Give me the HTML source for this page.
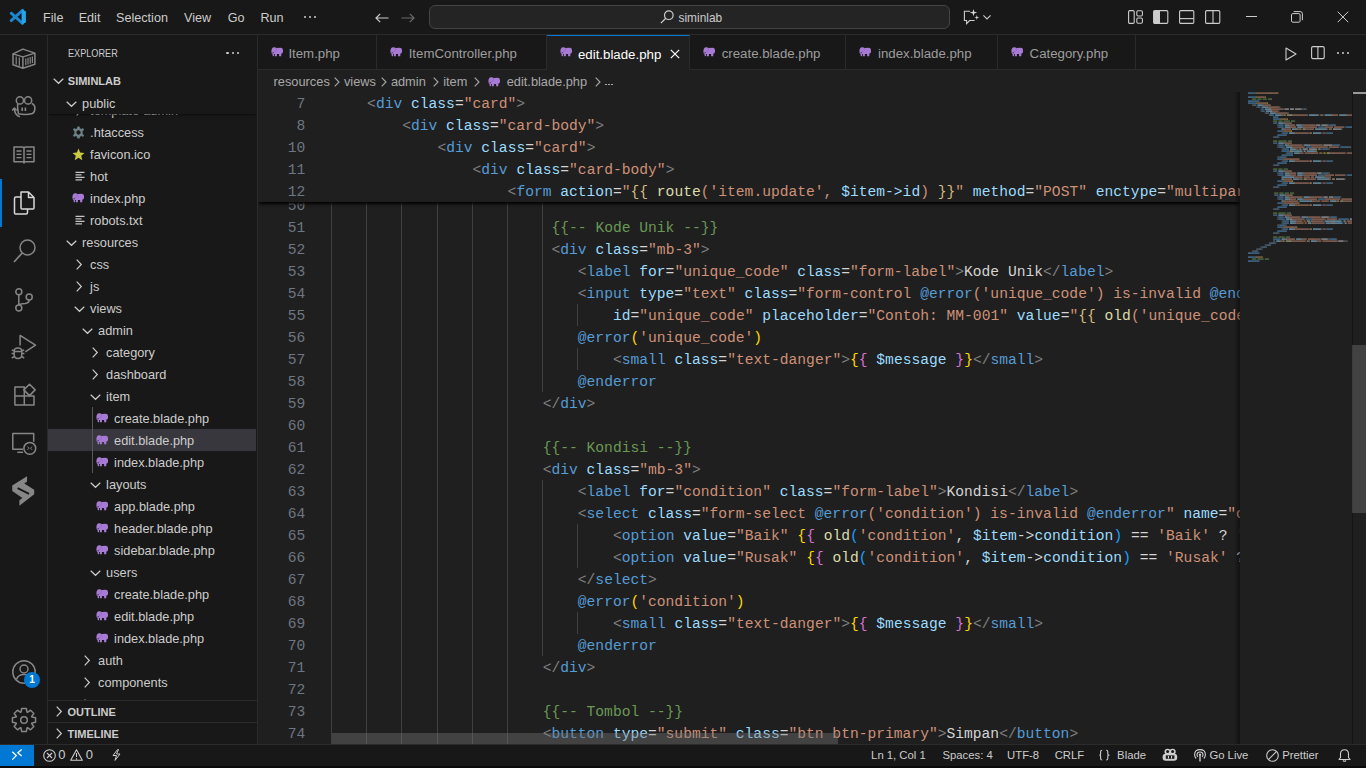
<!DOCTYPE html>
<html><head><meta charset="utf-8">
<style>
*{margin:0;padding:0;box-sizing:border-box}
html,body{width:1366px;height:768px;overflow:hidden;background:#181818;font-family:"Liberation Sans",sans-serif;color:#ccc}
.abs{position:absolute}
svg{position:absolute;overflow:visible}
#title{left:0;top:0;width:1366px;height:35px;background:#181818;border-bottom:1px solid #2b2b2b}
.menu{position:absolute;top:11px;font-size:12.6px;line-height:14px;color:#cccccc;white-space:nowrap}
#act{left:0;top:35px;width:48px;height:709px;background:#181818;border-right:1px solid #2b2b2b}
#side{left:48px;top:35px;width:210px;height:709px;background:#181818;border-right:1px solid #2b2b2b;overflow:hidden}
#tabs{left:258px;top:35px;width:1108px;height:35px;background:#181818;border-bottom:1px solid #2b2b2b}
.tab{position:absolute;top:0;height:35px;border-right:1px solid #2b2b2b;font-size:13.25px;color:#9d9d9d;white-space:nowrap}
.tab.act{background:#1f1f1f;color:#fff;border-top:1px solid #0078d4;height:35px}
.tab span{position:absolute;top:12px;line-height:14px}
#editor{left:258px;top:70px;width:1108px;height:674px;background:#1f1f1f;overflow:hidden}
#status{left:0;top:744px;width:1366px;height:22px;background:#181818;border-top:1px solid #2b2b2b;font-size:11.3px;color:#cccccc}
#bottomedge{left:0;top:766px;width:1366px;height:2px;background:#0a0a0a}
.st{position:absolute;top:4.3px;line-height:13px;white-space:nowrap}
.code{position:absolute;margin-top:1px;font-family:"Liberation Mono",monospace;font-size:14.645px;white-space:pre;color:#d4d4d4;line-height:22px;height:22px}
.ln{position:absolute;margin-top:1px;left:0;width:47.2px;text-align:right;font-family:"Liberation Mono",monospace;font-size:14.645px;color:#6e7681;line-height:22px;height:22px}
.gd{position:absolute;width:1px;background:#404040}
.tree{position:absolute;left:0;width:209px;height:22px;font-size:12.75px;color:#cccccc;white-space:nowrap}
.tree span{position:absolute;top:4.8px;line-height:14px}
.bc{position:absolute;top:8px;font-size:12.8px;line-height:14px;color:#a9a9a9;white-space:nowrap}
.p{color:#808080}
.t{color:#569cd6}
.a{color:#9cdcfe}
.e{color:#d4d4d4}
.s{color:#ce9178}
.x{color:#d4d4d4}
.c{color:#6a9955}
.k{color:#569cd6}
.g{color:#ffd700}
.o{color:#da70d6}
.bl{color:#179fff}
.v{color:#9cdcfe}
.f{color:#dcdcaa}
.y{color:#d7ba7d}
</style></head>
<body>
<div id="title" class="abs">
<svg style="left:6px;top:6px" width="24" height="22" viewBox="6 6 24 22"><path d="M22.6 10.2 L11.2 20.6 M22.6 23.4 L11.2 13.2" stroke="#1b87d2" stroke-width="2.9" stroke-linecap="round"/><path d="M21.6 9.4 L25.9 11.2 V22.5 L21.6 24.3 Z" fill="#27a3ee"/></svg>
<div class="menu" style="left:43.1px">File</div>
<div class="menu" style="left:78.7px">Edit</div>
<div class="menu" style="left:116.1px">Selection</div>
<div class="menu" style="left:184.1px">View</div>
<div class="menu" style="left:227.7px">Go</div>
<div class="menu" style="left:260.5px">Run</div>
<div class="abs" style="left:303.6px;top:16px;width:2.2px;height:2.2px;background:#ccc;border-radius:1px"></div>
<div class="abs" style="left:308.8px;top:16px;width:2.2px;height:2.2px;background:#ccc;border-radius:1px"></div>
<div class="abs" style="left:314.0px;top:16px;width:2.2px;height:2.2px;background:#ccc;border-radius:1px"></div>
<svg style="left:375px;top:13px" width="14" height="10" viewBox="0 0 14 10"><path d="M13.5 5 H1 M5.2 0.8 L1 5 L5.2 9.2" fill="none" stroke="#cccccc" stroke-width="1.2"/></svg>
<svg style="left:401px;top:13px" width="14" height="10" viewBox="0 0 14 10"><path d="M0.5 5 H13 M8.8 0.8 L13 5 L8.8 9.2" fill="none" stroke="#6b6b6b" stroke-width="1.2"/></svg>
<div class="abs" style="left:429px;top:5px;width:521px;height:24px;background:#242424;border:1px solid #444444;border-radius:6px"></div>
<svg style="left:660px;top:10px" width="14" height="14" viewBox="0 0 14 14"><circle cx="8.8" cy="5.2" r="4.3" fill="none" stroke="#cccccc" stroke-width="1.2"/><path d="M5.8 8.2 L0.9 13.1" stroke="#cccccc" stroke-width="1.3"/></svg>
<div class="menu" style="left:678.5px;top:11px;font-size:11.9px">siminlab</div>
<svg style="left:960px;top:7px" width="34" height="20" viewBox="960 7 34 20"><path d="M970.2 11.2 H964.4 V20.5 H966.6 V23.6 L969.6 20.5 H974.6" fill="none" stroke="#cccccc" stroke-width="1.1"/><path d="M973.50 8.90 L974.28 11.82 L977.20 12.60 L974.28 13.38 L973.50 16.30 L972.72 13.38 L969.80 12.60 L972.72 11.82 Z" fill="#d8d8d8"/><path d="M976.80 14.90 L977.37 16.93 L979.40 17.50 L977.37 18.07 L976.80 20.10 L976.23 18.07 L974.20 17.50 L976.23 16.93 Z" fill="#d8d8d8"/><path d="M983.4 15.4 L987 18.9 L990.6 15.4" fill="none" stroke="#cccccc" stroke-width="1.1"/></svg>
<svg style="left:1128px;top:10px" width="15" height="14" viewBox="0 0 15 14"><rect x="0.6" y="0.6" width="5.6" height="12.8" rx="1.2" fill="none" stroke="#cccccc" stroke-width="1.1"/><rect x="8.8" y="0.8" width="5.6" height="5.2" rx="1.2" fill="none" stroke="#cccccc" stroke-width="1.1"/><rect x="8.8" y="8" width="5.6" height="5.2" rx="1.2" fill="none" stroke="#cccccc" stroke-width="1.1"/></svg>
<svg style="left:1153px;top:10px" width="16" height="14" viewBox="0 0 16 14"><rect x="0.6" y="0.6" width="14.2" height="12.8" rx="1.2" fill="none" stroke="#cccccc" stroke-width="1.1"/><rect x="1" y="1" width="6" height="12" fill="#cccccc"/></svg>
<svg style="left:1179px;top:10px" width="16" height="14" viewBox="0 0 16 14"><rect x="0.6" y="0.6" width="14.2" height="12.8" rx="1.2" fill="none" stroke="#cccccc" stroke-width="1.1"/><path d="M0.6 8.6 H14.8" stroke="#cccccc" stroke-width="1.1"/></svg>
<svg style="left:1205px;top:10px" width="16" height="14" viewBox="0 0 16 14"><rect x="0.6" y="0.6" width="14.2" height="12.8" rx="1.2" fill="none" stroke="#cccccc" stroke-width="1.1"/><path d="M8 0.6 V13.4" stroke="#cccccc" stroke-width="1.1"/></svg>
<div class="abs" style="left:1246px;top:16px;width:10.5px;height:1px;background:#cccccc"></div>
<svg style="left:1291px;top:11px" width="12" height="12" viewBox="0 0 12 12"><rect x="0.5" y="2.6" width="8.6" height="8.6" rx="1.3" fill="none" stroke="#cccccc" stroke-width="1"/><path d="M2.7 0.6 H9.2 Q11.4 0.6 11.4 2.8 V9.2" fill="none" stroke="#cccccc" stroke-width="1"/></svg>
<svg style="left:1337px;top:11px" width="12" height="12" viewBox="0 0 12 12"><path d="M0.7 0.7 L11.2 11.2 M11.2 0.7 L0.7 11.2" stroke="#cccccc" stroke-width="1"/></svg>
</div>
<div id="act" class="abs">
<svg style="left:10.0px;top:11.0px" width="28" height="26" viewBox="10 46 28 26"><path d="M13 53.9 L22.9 49.1 L34.9 53.1 V64.3 L22.9 68.3 L13 64.8 Z M13 53.9 L22.9 56.9 L34.9 53.1 M22.9 56.9 V68.3" stroke-width="1.5" fill="none" stroke="#868686" stroke-linejoin="round"/><path d="M16.2 56.5 V64.5 M19.3 57.5 V65.8 M25.8 58.5 V65.2 M28 57.8 V64.5 M30.2 57.1 V63.8 M32.4 56.4 V63.1" stroke="#868686" stroke-width="1.2"/></svg>
<svg style="left:10.0px;top:59.0px" width="27" height="25" viewBox="10 94 27 25"><circle cx="19.9" cy="100.4" r="3.6" stroke-width="1.5" fill="none" stroke="#868686" stroke-linejoin="round"/><circle cx="28.1" cy="100.4" r="3.6" stroke-width="1.5" fill="none" stroke="#868686" stroke-linejoin="round"/><path d="M17.6 104 Q17.2 108 18.5 113.8 Q26 115.5 32.5 113.5 Q35 112 34.9 108 Q34.8 104.5 31.8 103.5" stroke-width="1.5" fill="none" stroke="#868686" stroke-linejoin="round"/><path d="M22.2 107.4 V111 M25.4 107.4 V111" stroke="#868686" stroke-width="1.6"/><path d="M19.9 116.8 Q14.4 115 14.4 108.5 M12.2 110.6 L14.4 108 L16.6 110.6" stroke-width="1.5" fill="none" stroke="#868686" stroke-linejoin="round"/></svg>
<svg style="left:12.8px;top:110.7px" width="22" height="18" viewBox="0 0 22 18"><path d="M1 1 H9.5 Q11 1 11 2.5 V17 Q11 15.8 9.5 15.8 H1 Z M21 1 H12.5 Q11 1 11 2.5 V17 Q11 15.8 12.5 15.8 H21 Z" stroke-width="1.5" fill="none" stroke="#868686" stroke-linejoin="round"/><path d="M3.5 5 H8.5 M3.5 8.3 H8.5 M3.5 11.6 H8.5 M13.5 5 H18.5 M13.5 8.3 H18.5 M13.5 11.6 H18.5" stroke="#868686" stroke-width="1.3"/></svg>
<svg style="left:13.0px;top:156.0px" width="22" height="24" viewBox="0 0 22 24"><path d="M8 1 H15.5 L21 6.5 V17 Q21 18 20 18 H9 Q8 18 8 17 Z M15.5 1 V6.5 H21" stroke-width="1.5" fill="none" stroke="#d7d7d7" stroke-linejoin="round"/><path d="M8 6 H3 Q1.5 6 1.5 7.5 V22 Q1.5 23 2.5 23 H13 Q14.5 23 14.5 21.5 V18" stroke-width="1.5" fill="none" stroke="#d7d7d7" stroke-linejoin="round"/></svg>
<svg style="left:13.0px;top:204.0px" width="23" height="24" viewBox="0 0 23 24"><circle cx="14.5" cy="8.5" r="7.5" stroke-width="1.5" fill="none" stroke="#868686" stroke-linejoin="round"/><path d="M9.2 14 L1 23" stroke="#868686" stroke-width="1.7"/></svg>
<svg style="left:15.0px;top:252.5px" width="18" height="24" viewBox="0 0 18 24"><circle cx="3.8" cy="3.8" r="3" stroke-width="1.5" fill="none" stroke="#868686" stroke-linejoin="round"/><circle cx="3.8" cy="20" r="3" stroke-width="1.5" fill="none" stroke="#868686" stroke-linejoin="round"/><circle cx="14.2" cy="9" r="3" stroke-width="1.5" fill="none" stroke="#868686" stroke-linejoin="round"/><path d="M3.8 6.8 V17 M14.2 12 Q14.2 15 10 15.5 Q4.5 16 3.8 17" stroke-width="1.5" fill="none" stroke="#868686" stroke-linejoin="round"/></svg>
<svg style="left:9.0px;top:297.0px" width="30" height="30" viewBox="9 332 30 30"><path d="M20.1 345.6 V335.4 L35.5 345.1 L25.3 351.8" stroke-width="1.5" fill="none" stroke="#868686" stroke-linejoin="round"/><path d="M14.2 351 Q14.2 348 18 348 Q21.8 348 21.8 351 V354.5 Q21.8 358.5 18 358.5 Q14.2 358.5 14.2 354.5 Z M11.8 349.8 L14.2 351 M24.2 349.8 L21.8 351 M11.6 353.6 H14.2 M24.4 353.6 H21.8 M11.8 358 L14.4 356.4 M24.2 358 L21.6 356.4 M14.4 351.6 H21.6" stroke-width="1.5" fill="none" stroke="#868686" stroke-linejoin="round"/></svg>
<svg style="left:12.0px;top:347.0px" width="26" height="26" viewBox="12 382 26 26"><path d="M14.9 386.9 H24.3 V405 H14.9 Z M14.9 395.9 H34 V405 H24.3" stroke-width="1.5" fill="none" stroke="#868686" stroke-linejoin="round"/><path d="M29.5 384.2 L35.2 389.9 L29.5 395.6 L23.8 389.9 Z" stroke-width="1.5" fill="none" stroke="#868686" stroke-linejoin="round"/></svg>
<svg style="left:9.0px;top:395.0px" width="30" height="28" viewBox="9 430 30 28"><path d="M23.2 449.3 H12.8 V433.6 H33.7 V441.8" stroke-width="1.5" fill="none" stroke="#868686" stroke-linejoin="round"/><path d="M17.3 452.3 H23" stroke-width="1.5" fill="none" stroke="#868686" stroke-linejoin="round"/><circle cx="29.8" cy="448.3" r="5.9" fill="#181818" stroke="#868686" stroke-width="1.5"/><path d="M27.6 446.6 L29 448.2 L27.6 449.8 M32 446.6 L30.6 448.2 L32 449.8" stroke="#868686" stroke-width="1" fill="none"/></svg>
<svg style="left:9.0px;top:438.0px" width="30" height="36" viewBox="9 473 30 36"><path d="M27.06 476.2 L27.06 481.4 L24.3 483.6 L34.2 489.8 L34.2 494.3 L19.4 505.7 L19.4 500.2 L22.4 498 L12.2 491.1 L12.2 485.6 Z" fill="#868686"/><path d="M17.65 488.1 L29.0 493.9" stroke="#181818" stroke-width="1.8"/></svg>
<svg style="left:11.7px;top:625.0px" width="24" height="24" viewBox="0 0 24 24"><circle cx="12" cy="12" r="11.2" stroke-width="1.5" fill="none" stroke="#868686" stroke-linejoin="round"/><circle cx="12" cy="9" r="4" stroke-width="1.5" fill="none" stroke="#868686" stroke-linejoin="round"/><path d="M4.5 19.5 Q6 14.5 12 14.5 Q18 14.5 19.5 19.5" stroke-width="1.5" fill="none" stroke="#868686" stroke-linejoin="round"/></svg>
<div class="abs" style="left:24px;top:637px;width:16px;height:16px;border-radius:8px;background:#0078d4;color:#fff;font-size:10px;font-weight:bold;text-align:center;line-height:16px">1</div>
<svg style="left:11.7px;top:672.8px" width="24" height="24" viewBox="0 0 24 24"><path d="M23.56 9.66 L23.56 14.34 L19.86 14.96 L19.65 15.47 L21.84 18.52 L18.52 21.84 L15.47 19.65 L14.96 19.86 L14.34 23.56 L9.66 23.56 L9.04 19.86 L8.53 19.65 L5.48 21.84 L2.16 18.52 L4.35 15.47 L4.14 14.96 L0.44 14.34 L0.44 9.66 L4.14 9.04 L4.35 8.53 L2.16 5.48 L5.48 2.16 L8.53 4.35 L9.04 4.14 L9.66 0.44 L14.34 0.44 L14.96 4.14 L15.47 4.35 L18.52 2.16 L21.84 5.48 L19.65 8.53 L19.86 9.04 Z" stroke-width="1.5" fill="none" stroke="#868686" stroke-linejoin="round"/><circle cx="12" cy="12" r="3.3" stroke-width="1.5" fill="none" stroke="#868686" stroke-linejoin="round"/></svg>
<div class="abs" style="left:0;top:144px;width:2px;height:48px;background:#0078d4"></div>
</div>
<div id="side" class="abs">
<div class="abs" style="left:20.2px;top:12.0px;font-size:11px;line-height:12px;color:#cccccc;transform:scaleX(0.83);transform-origin:0 0;white-space:nowrap">EXPLORER</div>
<div class="abs" style="left:178.4px;top:16.8px;width:2.2px;height:2.2px;background:#ccc;border-radius:1px"></div>
<div class="abs" style="left:183.6px;top:16.8px;width:2.2px;height:2.2px;background:#ccc;border-radius:1px"></div>
<div class="abs" style="left:188.8px;top:16.8px;width:2.2px;height:2.2px;background:#ccc;border-radius:1px"></div>
<svg style="left:5.0px;top:43.2px" width="11" height="6" viewBox="0 0 11 6"><path d="M0.7 0.7 L5.5 5.3 L10.3 0.7" fill="none" stroke="#cccccc" stroke-width="1.2"/></svg>
<div class="abs" style="left:19.8px;top:40.0px;font-size:11px;font-weight:bold;line-height:12px;color:#cccccc;white-space:nowrap">SIMINLAB</div>
<div class="abs" style="left:0;top:394px;width:208px;height:22px;background:#37373d"></div>
<div class="abs" style="left:44px;top:372px;width:1px;height:66px;background:#585858"></div>
<svg style="left:28.0px;top:69.8px" width="6" height="11" viewBox="0 0 6 11"><path d="M0.7 0.7 L5.3 5.5 L0.7 10.3" fill="none" stroke="#cccccc" stroke-width="1.2"/></svg>
<div class="tree" style="top:64.3px"><span style="left:42.1px">template-admin</span></div>
<svg style="left:23.5px;top:90.5px" width="13" height="13" viewBox="0 0 24 24"><path d="M10 1 H14 L14.7 4.2 L17.3 5.5 L20.3 3.8 L22.2 7.2 L19.6 9.4 V14.6 L22.2 16.8 L20.3 20.2 L17.3 18.5 L14.7 19.8 L14 23 H10 L9.3 19.8 L6.7 18.5 L3.7 20.2 L1.8 16.8 L4.4 14.6 V9.4 L1.8 7.2 L3.7 3.8 L6.7 5.5 L9.3 4.2 Z M12 8 A4 4 0 1 0 12.01 8 Z" fill="#6d8086" fill-rule="evenodd"/></svg>
<div class="tree" style="top:86.0px"><span style="left:42.1px">.htaccess</span></div>
<svg style="left:23.5px;top:112.5px" width="13" height="13" viewBox="0 0 24 24"><path d="M12 1 L15 8.5 L23 9 L17 14.2 L19 22.5 L12 18 L5 22.5 L7 14.2 L1 9 L9 8.5 Z" fill="#cbcb41"/></svg>
<div class="tree" style="top:108.0px"><span style="left:42.1px">favicon.ico</span></div>
<svg style="left:27.0px;top:136.0px" width="10" height="10" viewBox="0 0 10 10"><path d="M0.5 1.3 H9.5 M0.5 3.8 H6.5 M0.5 6.3 H9.5 M0.5 8.8 H7" stroke="#c5c5c5" stroke-width="1.3"/></svg>
<div class="tree" style="top:130.0px"><span style="left:42.1px">hot</span></div>
<svg style="left:23.6px;top:158.0px" width="13" height="9.5" viewBox="0 0 26 19"><path d="M0.8 9.5 Q0.6 0.8 6.2 0.6 Q9.6 0.5 11 1.8 L20 1.6 Q24.2 1.8 24 6.5 V10 Q23.8 12.6 20.6 13.7 V18.6 H16.2 V13.8 H11.8 V18.6 H7.9 V14 H6.3 V17.4 Q6 18.6 4.6 18.5 Q3 18.3 3.2 16.5 V14.2 Q0.8 13.4 0.8 9.5 Z" fill="#a77bd3"/><ellipse cx="4.4" cy="11.4" rx="1.5" ry="1.3" fill="#4a3566"/><path d="M10.8 2.2 Q12 6.2 9.6 8.2 Q8 9.2 6 8.8" fill="none" stroke="#8a5fb5" stroke-width="1.1"/></svg>
<div class="tree" style="top:152.0px"><span style="left:42.1px">index.php</span></div>
<svg style="left:27.0px;top:180.0px" width="10" height="10" viewBox="0 0 10 10"><path d="M0.5 1.3 H9.5 M0.5 3.8 H6.5 M0.5 6.3 H9.5 M0.5 8.8 H7" stroke="#c5c5c5" stroke-width="1.3"/></svg>
<div class="tree" style="top:174.0px"><span style="left:42.1px">robots.txt</span></div>
<svg style="left:17.5px;top:204.5px" width="11" height="6" viewBox="0 0 11 6"><path d="M0.7 0.7 L5.5 5.3 L10.3 0.7" fill="none" stroke="#cccccc" stroke-width="1.2"/></svg>
<div class="tree" style="top:196.0px"><span style="left:34.1px">resources</span></div>
<svg style="left:28.0px;top:223.5px" width="6" height="11" viewBox="0 0 6 11"><path d="M0.7 0.7 L5.3 5.5 L0.7 10.3" fill="none" stroke="#cccccc" stroke-width="1.2"/></svg>
<div class="tree" style="top:218.0px"><span style="left:42.1px">css</span></div>
<svg style="left:28.0px;top:245.5px" width="6" height="11" viewBox="0 0 6 11"><path d="M0.7 0.7 L5.3 5.5 L0.7 10.3" fill="none" stroke="#cccccc" stroke-width="1.2"/></svg>
<div class="tree" style="top:240.0px"><span style="left:42.1px">js</span></div>
<svg style="left:25.5px;top:270.5px" width="11" height="6" viewBox="0 0 11 6"><path d="M0.7 0.7 L5.5 5.3 L10.3 0.7" fill="none" stroke="#cccccc" stroke-width="1.2"/></svg>
<div class="tree" style="top:262.0px"><span style="left:42.1px">views</span></div>
<svg style="left:33.5px;top:292.5px" width="11" height="6" viewBox="0 0 11 6"><path d="M0.7 0.7 L5.5 5.3 L10.3 0.7" fill="none" stroke="#cccccc" stroke-width="1.2"/></svg>
<div class="tree" style="top:284.0px"><span style="left:50.1px">admin</span></div>
<svg style="left:44.0px;top:311.5px" width="6" height="11" viewBox="0 0 6 11"><path d="M0.7 0.7 L5.3 5.5 L0.7 10.3" fill="none" stroke="#cccccc" stroke-width="1.2"/></svg>
<div class="tree" style="top:306.0px"><span style="left:58.1px">category</span></div>
<svg style="left:44.0px;top:333.5px" width="6" height="11" viewBox="0 0 6 11"><path d="M0.7 0.7 L5.3 5.5 L0.7 10.3" fill="none" stroke="#cccccc" stroke-width="1.2"/></svg>
<div class="tree" style="top:328.0px"><span style="left:58.1px">dashboard</span></div>
<svg style="left:41.5px;top:358.5px" width="11" height="6" viewBox="0 0 11 6"><path d="M0.7 0.7 L5.5 5.3 L10.3 0.7" fill="none" stroke="#cccccc" stroke-width="1.2"/></svg>
<div class="tree" style="top:350.0px"><span style="left:58.1px">item</span></div>
<svg style="left:47.6px;top:378.0px" width="13" height="9.5" viewBox="0 0 26 19"><path d="M0.8 9.5 Q0.6 0.8 6.2 0.6 Q9.6 0.5 11 1.8 L20 1.6 Q24.2 1.8 24 6.5 V10 Q23.8 12.6 20.6 13.7 V18.6 H16.2 V13.8 H11.8 V18.6 H7.9 V14 H6.3 V17.4 Q6 18.6 4.6 18.5 Q3 18.3 3.2 16.5 V14.2 Q0.8 13.4 0.8 9.5 Z" fill="#a77bd3"/><ellipse cx="4.4" cy="11.4" rx="1.5" ry="1.3" fill="#4a3566"/><path d="M10.8 2.2 Q12 6.2 9.6 8.2 Q8 9.2 6 8.8" fill="none" stroke="#8a5fb5" stroke-width="1.1"/></svg>
<div class="tree" style="top:372.0px"><span style="left:66.1px">create.blade.php</span></div>
<svg style="left:47.6px;top:400.0px" width="13" height="9.5" viewBox="0 0 26 19"><path d="M0.8 9.5 Q0.6 0.8 6.2 0.6 Q9.6 0.5 11 1.8 L20 1.6 Q24.2 1.8 24 6.5 V10 Q23.8 12.6 20.6 13.7 V18.6 H16.2 V13.8 H11.8 V18.6 H7.9 V14 H6.3 V17.4 Q6 18.6 4.6 18.5 Q3 18.3 3.2 16.5 V14.2 Q0.8 13.4 0.8 9.5 Z" fill="#a77bd3"/><ellipse cx="4.4" cy="11.4" rx="1.5" ry="1.3" fill="#4a3566"/><path d="M10.8 2.2 Q12 6.2 9.6 8.2 Q8 9.2 6 8.8" fill="none" stroke="#8a5fb5" stroke-width="1.1"/></svg>
<div class="tree" style="top:394.0px"><span style="left:66.1px">edit.blade.php</span></div>
<svg style="left:47.6px;top:422.0px" width="13" height="9.5" viewBox="0 0 26 19"><path d="M0.8 9.5 Q0.6 0.8 6.2 0.6 Q9.6 0.5 11 1.8 L20 1.6 Q24.2 1.8 24 6.5 V10 Q23.8 12.6 20.6 13.7 V18.6 H16.2 V13.8 H11.8 V18.6 H7.9 V14 H6.3 V17.4 Q6 18.6 4.6 18.5 Q3 18.3 3.2 16.5 V14.2 Q0.8 13.4 0.8 9.5 Z" fill="#a77bd3"/><ellipse cx="4.4" cy="11.4" rx="1.5" ry="1.3" fill="#4a3566"/><path d="M10.8 2.2 Q12 6.2 9.6 8.2 Q8 9.2 6 8.8" fill="none" stroke="#8a5fb5" stroke-width="1.1"/></svg>
<div class="tree" style="top:416.0px"><span style="left:66.1px">index.blade.php</span></div>
<svg style="left:41.5px;top:446.5px" width="11" height="6" viewBox="0 0 11 6"><path d="M0.7 0.7 L5.5 5.3 L10.3 0.7" fill="none" stroke="#cccccc" stroke-width="1.2"/></svg>
<div class="tree" style="top:438.0px"><span style="left:58.1px">layouts</span></div>
<svg style="left:47.6px;top:466.0px" width="13" height="9.5" viewBox="0 0 26 19"><path d="M0.8 9.5 Q0.6 0.8 6.2 0.6 Q9.6 0.5 11 1.8 L20 1.6 Q24.2 1.8 24 6.5 V10 Q23.8 12.6 20.6 13.7 V18.6 H16.2 V13.8 H11.8 V18.6 H7.9 V14 H6.3 V17.4 Q6 18.6 4.6 18.5 Q3 18.3 3.2 16.5 V14.2 Q0.8 13.4 0.8 9.5 Z" fill="#a77bd3"/><ellipse cx="4.4" cy="11.4" rx="1.5" ry="1.3" fill="#4a3566"/><path d="M10.8 2.2 Q12 6.2 9.6 8.2 Q8 9.2 6 8.8" fill="none" stroke="#8a5fb5" stroke-width="1.1"/></svg>
<div class="tree" style="top:460.0px"><span style="left:66.1px">app.blade.php</span></div>
<svg style="left:47.6px;top:488.0px" width="13" height="9.5" viewBox="0 0 26 19"><path d="M0.8 9.5 Q0.6 0.8 6.2 0.6 Q9.6 0.5 11 1.8 L20 1.6 Q24.2 1.8 24 6.5 V10 Q23.8 12.6 20.6 13.7 V18.6 H16.2 V13.8 H11.8 V18.6 H7.9 V14 H6.3 V17.4 Q6 18.6 4.6 18.5 Q3 18.3 3.2 16.5 V14.2 Q0.8 13.4 0.8 9.5 Z" fill="#a77bd3"/><ellipse cx="4.4" cy="11.4" rx="1.5" ry="1.3" fill="#4a3566"/><path d="M10.8 2.2 Q12 6.2 9.6 8.2 Q8 9.2 6 8.8" fill="none" stroke="#8a5fb5" stroke-width="1.1"/></svg>
<div class="tree" style="top:482.0px"><span style="left:66.1px">header.blade.php</span></div>
<svg style="left:47.6px;top:510.0px" width="13" height="9.5" viewBox="0 0 26 19"><path d="M0.8 9.5 Q0.6 0.8 6.2 0.6 Q9.6 0.5 11 1.8 L20 1.6 Q24.2 1.8 24 6.5 V10 Q23.8 12.6 20.6 13.7 V18.6 H16.2 V13.8 H11.8 V18.6 H7.9 V14 H6.3 V17.4 Q6 18.6 4.6 18.5 Q3 18.3 3.2 16.5 V14.2 Q0.8 13.4 0.8 9.5 Z" fill="#a77bd3"/><ellipse cx="4.4" cy="11.4" rx="1.5" ry="1.3" fill="#4a3566"/><path d="M10.8 2.2 Q12 6.2 9.6 8.2 Q8 9.2 6 8.8" fill="none" stroke="#8a5fb5" stroke-width="1.1"/></svg>
<div class="tree" style="top:504.0px"><span style="left:66.1px">sidebar.blade.php</span></div>
<svg style="left:41.5px;top:534.5px" width="11" height="6" viewBox="0 0 11 6"><path d="M0.7 0.7 L5.5 5.3 L10.3 0.7" fill="none" stroke="#cccccc" stroke-width="1.2"/></svg>
<div class="tree" style="top:526.0px"><span style="left:58.1px">users</span></div>
<svg style="left:47.6px;top:554.0px" width="13" height="9.5" viewBox="0 0 26 19"><path d="M0.8 9.5 Q0.6 0.8 6.2 0.6 Q9.6 0.5 11 1.8 L20 1.6 Q24.2 1.8 24 6.5 V10 Q23.8 12.6 20.6 13.7 V18.6 H16.2 V13.8 H11.8 V18.6 H7.9 V14 H6.3 V17.4 Q6 18.6 4.6 18.5 Q3 18.3 3.2 16.5 V14.2 Q0.8 13.4 0.8 9.5 Z" fill="#a77bd3"/><ellipse cx="4.4" cy="11.4" rx="1.5" ry="1.3" fill="#4a3566"/><path d="M10.8 2.2 Q12 6.2 9.6 8.2 Q8 9.2 6 8.8" fill="none" stroke="#8a5fb5" stroke-width="1.1"/></svg>
<div class="tree" style="top:548.0px"><span style="left:66.1px">create.blade.php</span></div>
<svg style="left:47.6px;top:576.0px" width="13" height="9.5" viewBox="0 0 26 19"><path d="M0.8 9.5 Q0.6 0.8 6.2 0.6 Q9.6 0.5 11 1.8 L20 1.6 Q24.2 1.8 24 6.5 V10 Q23.8 12.6 20.6 13.7 V18.6 H16.2 V13.8 H11.8 V18.6 H7.9 V14 H6.3 V17.4 Q6 18.6 4.6 18.5 Q3 18.3 3.2 16.5 V14.2 Q0.8 13.4 0.8 9.5 Z" fill="#a77bd3"/><ellipse cx="4.4" cy="11.4" rx="1.5" ry="1.3" fill="#4a3566"/><path d="M10.8 2.2 Q12 6.2 9.6 8.2 Q8 9.2 6 8.8" fill="none" stroke="#8a5fb5" stroke-width="1.1"/></svg>
<div class="tree" style="top:570.0px"><span style="left:66.1px">edit.blade.php</span></div>
<svg style="left:47.6px;top:598.0px" width="13" height="9.5" viewBox="0 0 26 19"><path d="M0.8 9.5 Q0.6 0.8 6.2 0.6 Q9.6 0.5 11 1.8 L20 1.6 Q24.2 1.8 24 6.5 V10 Q23.8 12.6 20.6 13.7 V18.6 H16.2 V13.8 H11.8 V18.6 H7.9 V14 H6.3 V17.4 Q6 18.6 4.6 18.5 Q3 18.3 3.2 16.5 V14.2 Q0.8 13.4 0.8 9.5 Z" fill="#a77bd3"/><ellipse cx="4.4" cy="11.4" rx="1.5" ry="1.3" fill="#4a3566"/><path d="M10.8 2.2 Q12 6.2 9.6 8.2 Q8 9.2 6 8.8" fill="none" stroke="#8a5fb5" stroke-width="1.1"/></svg>
<div class="tree" style="top:592.0px"><span style="left:66.1px">index.blade.php</span></div>
<svg style="left:36.0px;top:619.5px" width="6" height="11" viewBox="0 0 6 11"><path d="M0.7 0.7 L5.3 5.5 L0.7 10.3" fill="none" stroke="#cccccc" stroke-width="1.2"/></svg>
<div class="tree" style="top:614.0px"><span style="left:50.1px">auth</span></div>
<svg style="left:36.0px;top:641.5px" width="6" height="11" viewBox="0 0 6 11"><path d="M0.7 0.7 L5.3 5.5 L0.7 10.3" fill="none" stroke="#cccccc" stroke-width="1.2"/></svg>
<div class="tree" style="top:636.0px"><span style="left:50.1px">components</span></div>
<svg style="left:36.0px;top:663.5px" width="6" height="11" viewBox="0 0 6 11"><path d="M0.7 0.7 L5.3 5.5 L0.7 10.3" fill="none" stroke="#cccccc" stroke-width="1.2"/></svg>
<div class="tree" style="top:658.0px"><span style="left:50.1px">lang</span></div>
<div class="abs" style="left:0;top:57px;width:209px;height:22px;background:#181818;box-shadow:0 2px 2px -1px rgba(0,0,0,0.55)"></div>
<svg style="left:18.0px;top:65.5px" width="11" height="6" viewBox="0 0 11 6"><path d="M0.7 0.7 L5.5 5.3 L10.3 0.7" fill="none" stroke="#cccccc" stroke-width="1.2"/></svg>
<div class="tree" style="top:57px"><span style="left:34.1px">public</span></div>
<div class="abs" style="left:0;top:665px;width:209px;height:44px;background:#181818;border-top:1px solid #2b2b2b"></div>
<div class="abs" style="left:0;top:687px;width:209px;height:1px;background:#2b2b2b"></div>
<svg style="left:8.0px;top:670.5px" width="6" height="11" viewBox="0 0 6 11"><path d="M0.7 0.7 L5.3 5.5 L0.7 10.3" fill="none" stroke="#cccccc" stroke-width="1.2"/></svg>
<svg style="left:8.0px;top:692.5px" width="6" height="11" viewBox="0 0 6 11"><path d="M0.7 0.7 L5.3 5.5 L0.7 10.3" fill="none" stroke="#cccccc" stroke-width="1.2"/></svg>
<div class="abs" style="left:19.5px;top:670.5px;font-size:11px;font-weight:bold;line-height:12px;color:#cccccc;white-space:nowrap">OUTLINE</div>
<div class="abs" style="left:19.5px;top:692.5px;font-size:11px;font-weight:bold;line-height:12px;color:#cccccc;white-space:nowrap">TIMELINE</div>
</div>
<div id="tabs" class="abs">
<div class="tab" style="left:0px;width:119px"><span style="left:30.4px">Item.php</span></div>
<svg style="left:12.5px;top:12.3px" width="13" height="9.5" viewBox="0 0 26 19"><path d="M0.8 9.5 Q0.6 0.8 6.2 0.6 Q9.6 0.5 11 1.8 L20 1.6 Q24.2 1.8 24 6.5 V10 Q23.8 12.6 20.6 13.7 V18.6 H16.2 V13.8 H11.8 V18.6 H7.9 V14 H6.3 V17.4 Q6 18.6 4.6 18.5 Q3 18.3 3.2 16.5 V14.2 Q0.8 13.4 0.8 9.5 Z" fill="#a77bd3"/><ellipse cx="4.4" cy="11.4" rx="1.5" ry="1.3" fill="#4a3566"/><path d="M10.8 2.2 Q12 6.2 9.6 8.2 Q8 9.2 6 8.8" fill="none" stroke="#8a5fb5" stroke-width="1.1"/></svg>
<div class="tab" style="left:119px;width:170px"><span style="left:31.7px">ItemController.php</span></div>
<svg style="left:132.3px;top:12.3px" width="13" height="9.5" viewBox="0 0 26 19"><path d="M0.8 9.5 Q0.6 0.8 6.2 0.6 Q9.6 0.5 11 1.8 L20 1.6 Q24.2 1.8 24 6.5 V10 Q23.8 12.6 20.6 13.7 V18.6 H16.2 V13.8 H11.8 V18.6 H7.9 V14 H6.3 V17.4 Q6 18.6 4.6 18.5 Q3 18.3 3.2 16.5 V14.2 Q0.8 13.4 0.8 9.5 Z" fill="#a77bd3"/><ellipse cx="4.4" cy="11.4" rx="1.5" ry="1.3" fill="#4a3566"/><path d="M10.8 2.2 Q12 6.2 9.6 8.2 Q8 9.2 6 8.8" fill="none" stroke="#8a5fb5" stroke-width="1.1"/></svg>
<div class="tab act" style="left:289px;width:143px"><span style="left:31.0px">edit.blade.php</span></div>
<svg style="left:301.7px;top:12.3px" width="13" height="9.5" viewBox="0 0 26 19"><path d="M0.8 9.5 Q0.6 0.8 6.2 0.6 Q9.6 0.5 11 1.8 L20 1.6 Q24.2 1.8 24 6.5 V10 Q23.8 12.6 20.6 13.7 V18.6 H16.2 V13.8 H11.8 V18.6 H7.9 V14 H6.3 V17.4 Q6 18.6 4.6 18.5 Q3 18.3 3.2 16.5 V14.2 Q0.8 13.4 0.8 9.5 Z" fill="#a77bd3"/><ellipse cx="4.4" cy="11.4" rx="1.5" ry="1.3" fill="#4a3566"/><path d="M10.8 2.2 Q12 6.2 9.6 8.2 Q8 9.2 6 8.8" fill="none" stroke="#8a5fb5" stroke-width="1.1"/></svg>
<div class="tab" style="left:432px;width:156px"><span style="left:31.7px">create.blade.php</span></div>
<svg style="left:445.4px;top:12.3px" width="13" height="9.5" viewBox="0 0 26 19"><path d="M0.8 9.5 Q0.6 0.8 6.2 0.6 Q9.6 0.5 11 1.8 L20 1.6 Q24.2 1.8 24 6.5 V10 Q23.8 12.6 20.6 13.7 V18.6 H16.2 V13.8 H11.8 V18.6 H7.9 V14 H6.3 V17.4 Q6 18.6 4.6 18.5 Q3 18.3 3.2 16.5 V14.2 Q0.8 13.4 0.8 9.5 Z" fill="#a77bd3"/><ellipse cx="4.4" cy="11.4" rx="1.5" ry="1.3" fill="#4a3566"/><path d="M10.8 2.2 Q12 6.2 9.6 8.2 Q8 9.2 6 8.8" fill="none" stroke="#8a5fb5" stroke-width="1.1"/></svg>
<div class="tab" style="left:588px;width:152px"><span style="left:32.0px">index.blade.php</span></div>
<svg style="left:601.3px;top:12.3px" width="13" height="9.5" viewBox="0 0 26 19"><path d="M0.8 9.5 Q0.6 0.8 6.2 0.6 Q9.6 0.5 11 1.8 L20 1.6 Q24.2 1.8 24 6.5 V10 Q23.8 12.6 20.6 13.7 V18.6 H16.2 V13.8 H11.8 V18.6 H7.9 V14 H6.3 V17.4 Q6 18.6 4.6 18.5 Q3 18.3 3.2 16.5 V14.2 Q0.8 13.4 0.8 9.5 Z" fill="#a77bd3"/><ellipse cx="4.4" cy="11.4" rx="1.5" ry="1.3" fill="#4a3566"/><path d="M10.8 2.2 Q12 6.2 9.6 8.2 Q8 9.2 6 8.8" fill="none" stroke="#8a5fb5" stroke-width="1.1"/></svg>
<div class="tab" style="left:740px;width:138px"><span style="left:31.6px">Category.php</span></div>
<svg style="left:753.4px;top:12.3px" width="13" height="9.5" viewBox="0 0 26 19"><path d="M0.8 9.5 Q0.6 0.8 6.2 0.6 Q9.6 0.5 11 1.8 L20 1.6 Q24.2 1.8 24 6.5 V10 Q23.8 12.6 20.6 13.7 V18.6 H16.2 V13.8 H11.8 V18.6 H7.9 V14 H6.3 V17.4 Q6 18.6 4.6 18.5 Q3 18.3 3.2 16.5 V14.2 Q0.8 13.4 0.8 9.5 Z" fill="#a77bd3"/><ellipse cx="4.4" cy="11.4" rx="1.5" ry="1.3" fill="#4a3566"/><path d="M10.8 2.2 Q12 6.2 9.6 8.2 Q8 9.2 6 8.8" fill="none" stroke="#8a5fb5" stroke-width="1.1"/></svg>
<svg style="left:412.3px;top:13.5px" width="10" height="10" viewBox="0 0 10 10"><path d="M0.8 0.8 L9.2 9.2 M9.2 0.8 L0.8 9.2" stroke="#ffffff" stroke-width="1.2"/></svg>
<svg style="left:1027.3px;top:11.5px" width="12" height="14" viewBox="0 0 12 14"><path d="M1 1 L11 7 L1 13 Z" fill="none" stroke="#cccccc" stroke-width="1.1" stroke-linejoin="round"/></svg>
<svg style="left:1053.0px;top:11.0px" width="14" height="13" viewBox="0 0 14 13"><rect x="0.6" y="0.6" width="12.6" height="12" rx="1.3" fill="none" stroke="#cccccc" stroke-width="1.1"/><path d="M6.9 0.6 V12.6" stroke="#cccccc" stroke-width="1.1"/></svg>
<div class="abs" style="left:1078.8px;top:17.1px;width:2.2px;height:2.2px;background:#ccc;border-radius:1px"></div>
<div class="abs" style="left:1084.0px;top:17.1px;width:2.2px;height:2.2px;background:#ccc;border-radius:1px"></div>
<div class="abs" style="left:1089.2px;top:17.1px;width:2.2px;height:2.2px;background:#ccc;border-radius:1px"></div>
</div>
<div id="editor" class="abs">
<div class="bc" style="left:15.6px;top:5px">resources</div>
<div class="bc" style="left:85.9px;top:5px">views</div>
<div class="bc" style="left:132.9px;top:5px">admin</div>
<div class="bc" style="left:185.2px;top:5px">item</div>
<div class="bc" style="left:248.7px;top:5px">edit.blade.php</div>
<svg style="left:75.5px;top:6.5px" width="6" height="10" viewBox="0 0 6 10"><path d="M0.7 0.7 L5 5 L0.7 9.3" fill="none" stroke="#a9a9a9" stroke-width="1.1"/></svg>
<svg style="left:123.0px;top:6.5px" width="6" height="10" viewBox="0 0 6 10"><path d="M0.7 0.7 L5 5 L0.7 9.3" fill="none" stroke="#a9a9a9" stroke-width="1.1"/></svg>
<svg style="left:174.7px;top:6.5px" width="6" height="10" viewBox="0 0 6 10"><path d="M0.7 0.7 L5 5 L0.7 9.3" fill="none" stroke="#a9a9a9" stroke-width="1.1"/></svg>
<svg style="left:216.0px;top:6.5px" width="6" height="10" viewBox="0 0 6 10"><path d="M0.7 0.7 L5 5 L0.7 9.3" fill="none" stroke="#a9a9a9" stroke-width="1.1"/></svg>
<svg style="left:336.5px;top:6.5px" width="6" height="10" viewBox="0 0 6 10"><path d="M0.7 0.7 L5 5 L0.7 9.3" fill="none" stroke="#a9a9a9" stroke-width="1.1"/></svg>
<svg style="left:229.9px;top:6.6px" width="13" height="9.5" viewBox="0 0 26 19"><path d="M0.8 9.5 Q0.6 0.8 6.2 0.6 Q9.6 0.5 11 1.8 L20 1.6 Q24.2 1.8 24 6.5 V10 Q23.8 12.6 20.6 13.7 V18.6 H16.2 V13.8 H11.8 V18.6 H7.9 V14 H6.3 V17.4 Q6 18.6 4.6 18.5 Q3 18.3 3.2 16.5 V14.2 Q0.8 13.4 0.8 9.5 Z" fill="#a77bd3"/><ellipse cx="4.4" cy="11.4" rx="1.5" ry="1.3" fill="#4a3566"/><path d="M10.8 2.2 Q12 6.2 9.6 8.2 Q8 9.2 6 8.8" fill="none" stroke="#8a5fb5" stroke-width="1.1"/></svg>
<div class="abs" style="left:347.0px;top:13.6px;width:1.8px;height:1.8px;background:#a9a9a9"></div>
<div class="abs" style="left:350.2px;top:13.6px;width:1.8px;height:1.8px;background:#a9a9a9"></div>
<div class="abs" style="left:353.4px;top:13.6px;width:1.8px;height:1.8px;background:#a9a9a9"></div>
<div class="abs" style="left:0;top:0;width:982px;height:674px;overflow:hidden">
<div class="gd" style="left:73.2px;top:22px;height:700px"></div>
<div class="gd" style="left:108.3px;top:22px;height:700px"></div>
<div class="gd" style="left:143.4px;top:22px;height:700px"></div>
<div class="gd" style="left:178.6px;top:22px;height:700px"></div>
<div class="gd" style="left:213.7px;top:22px;height:700px"></div>
<div class="gd" style="left:248.8px;top:22px;height:700px"></div>
<div class="gd" style="left:283.9px;top:124px;height:198px"></div>
<div class="gd" style="left:319.0px;top:234px;height:22px"></div>
<div class="gd" style="left:319.0px;top:278px;height:22px"></div>
<div class="gd" style="left:283.9px;top:410px;height:176px"></div>
<div class="gd" style="left:319.0px;top:454px;height:44px"></div>
<div class="gd" style="left:319.0px;top:542px;height:22px"></div>
<div class="ln" style="top:124px">50</div>
<div class="ln" style="top:146px">51</div>
<div class="code" style="top:146px;left:293.5px"><span class="c">{{-- Kode Unik --}}</span></div>
<div class="ln" style="top:168px">52</div>
<div class="code" style="top:168px;left:293.5px"><span class="p">&lt;</span><span class="t">div</span><span class="x"> </span><span class="a">class</span><span class="e">=</span><span class="s">&quot;mb-3&quot;</span><span class="p">&gt;</span></div>
<div class="ln" style="top:190px">53</div>
<div class="code" style="top:190px;left:319.8px"><span class="p">&lt;</span><span class="t">label</span><span class="x"> </span><span class="a">for</span><span class="e">=</span><span class="s">&quot;unique_code&quot;</span><span class="x"> </span><span class="a">class</span><span class="e">=</span><span class="s">&quot;form-label&quot;</span><span class="p">&gt;</span><span class="x">Kode Unik</span><span class="p">&lt;/</span><span class="t">label</span><span class="p">&gt;</span></div>
<div class="ln" style="top:212px">54</div>
<div class="code" style="top:212px;left:319.8px"><span class="p">&lt;</span><span class="t">input</span><span class="x"> </span><span class="a">type</span><span class="e">=</span><span class="s">&quot;text&quot;</span><span class="x"> </span><span class="a">class</span><span class="e">=</span><span class="s">&quot;form-control </span><span class="k">@error</span><span class="s">(&#x27;unique_code&#x27;) is-invalid </span><span class="k">@enderror</span><span class="s">&quot;</span><span class="x"> </span><span class="a">name</span><span class="e">=</span><span class="s">&quot;unique_code&quot;</span></div>
<div class="ln" style="top:234px">55</div>
<div class="code" style="top:234px;left:355.0px"><span class="a">id</span><span class="e">=</span><span class="s">&quot;unique_code&quot;</span><span class="x"> </span><span class="a">placeholder</span><span class="e">=</span><span class="s">&quot;Contoh: MM-001&quot;</span><span class="x"> </span><span class="a">value</span><span class="e">=</span><span class="s">&quot;</span><span class="y">{{</span><span class="x"> </span><span class="f">old</span><span class="s">(&#x27;unique_code&#x27;, </span><span class="v">$item-&gt;unique_code</span><span class="s">)</span><span class="x"> </span><span class="y">}}</span><span class="s">&quot;</span></div>
<div class="ln" style="top:256px">56</div>
<div class="code" style="top:256px;left:319.8px"><span class="k">@error</span><span class="g">(</span><span class="s">&#x27;unique_code&#x27;</span><span class="g">)</span></div>
<div class="ln" style="top:278px">57</div>
<div class="code" style="top:278px;left:355.0px"><span class="p">&lt;</span><span class="t">small</span><span class="x"> </span><span class="a">class</span><span class="e">=</span><span class="s">&quot;text-danger&quot;</span><span class="p">&gt;</span><span class="g">{</span><span class="o">{</span><span class="x"> </span><span class="v">$message</span><span class="x"> </span><span class="o">}</span><span class="g">}</span><span class="p">&lt;/</span><span class="t">small</span><span class="p">&gt;</span></div>
<div class="ln" style="top:300px">58</div>
<div class="code" style="top:300px;left:319.8px"><span class="k">@enderror</span></div>
<div class="ln" style="top:322px">59</div>
<div class="code" style="top:322px;left:284.7px"><span class="p">&lt;/</span><span class="t">div</span><span class="p">&gt;</span></div>
<div class="ln" style="top:344px">60</div>
<div class="ln" style="top:366px">61</div>
<div class="code" style="top:366px;left:284.7px"><span class="c">{{-- Kondisi --}}</span></div>
<div class="ln" style="top:388px">62</div>
<div class="code" style="top:388px;left:284.7px"><span class="p">&lt;</span><span class="t">div</span><span class="x"> </span><span class="a">class</span><span class="e">=</span><span class="s">&quot;mb-3&quot;</span><span class="p">&gt;</span></div>
<div class="ln" style="top:410px">63</div>
<div class="code" style="top:410px;left:319.8px"><span class="p">&lt;</span><span class="t">label</span><span class="x"> </span><span class="a">for</span><span class="e">=</span><span class="s">&quot;condition&quot;</span><span class="x"> </span><span class="a">class</span><span class="e">=</span><span class="s">&quot;form-label&quot;</span><span class="p">&gt;</span><span class="x">Kondisi</span><span class="p">&lt;/</span><span class="t">label</span><span class="p">&gt;</span></div>
<div class="ln" style="top:432px">64</div>
<div class="code" style="top:432px;left:319.8px"><span class="p">&lt;</span><span class="t">select</span><span class="x"> </span><span class="a">class</span><span class="e">=</span><span class="s">&quot;form-select </span><span class="k">@error</span><span class="s">(&#x27;condition&#x27;) is-invalid </span><span class="k">@enderror</span><span class="s">&quot;</span><span class="x"> </span><span class="a">name</span><span class="e">=</span><span class="s">&quot;condition&quot;</span></div>
<div class="ln" style="top:454px">65</div>
<div class="code" style="top:454px;left:355.0px"><span class="p">&lt;</span><span class="t">option</span><span class="x"> </span><span class="a">value</span><span class="e">=</span><span class="s">&quot;Baik&quot;</span><span class="x"> </span><span class="g">{</span><span class="o">{</span><span class="x"> </span><span class="f">old</span><span class="bl">(</span><span class="s">&#x27;condition&#x27;</span><span class="x">, </span><span class="v">$item</span><span class="x">-&gt;</span><span class="v">condition</span><span class="bl">)</span><span class="x"> == </span><span class="s">&#x27;Baik&#x27;</span><span class="x"> ? </span><span class="s">&#x27;selected&#x27;</span></div>
<div class="ln" style="top:476px">66</div>
<div class="code" style="top:476px;left:355.0px"><span class="p">&lt;</span><span class="t">option</span><span class="x"> </span><span class="a">value</span><span class="e">=</span><span class="s">&quot;Rusak&quot;</span><span class="x"> </span><span class="g">{</span><span class="o">{</span><span class="x"> </span><span class="f">old</span><span class="bl">(</span><span class="s">&#x27;condition&#x27;</span><span class="x">, </span><span class="v">$item</span><span class="x">-&gt;</span><span class="v">condition</span><span class="bl">)</span><span class="x"> == </span><span class="s">&#x27;Rusak&#x27;</span><span class="x"> ? </span><span class="s">&#x27;selected&#x27;</span></div>
<div class="ln" style="top:498px">67</div>
<div class="code" style="top:498px;left:319.8px"><span class="p">&lt;/</span><span class="t">select</span><span class="p">&gt;</span></div>
<div class="ln" style="top:520px">68</div>
<div class="code" style="top:520px;left:319.8px"><span class="k">@error</span><span class="g">(</span><span class="s">&#x27;condition&#x27;</span><span class="g">)</span></div>
<div class="ln" style="top:542px">69</div>
<div class="code" style="top:542px;left:355.0px"><span class="p">&lt;</span><span class="t">small</span><span class="x"> </span><span class="a">class</span><span class="e">=</span><span class="s">&quot;text-danger&quot;</span><span class="p">&gt;</span><span class="g">{</span><span class="o">{</span><span class="x"> </span><span class="v">$message</span><span class="x"> </span><span class="o">}</span><span class="g">}</span><span class="p">&lt;/</span><span class="t">small</span><span class="p">&gt;</span></div>
<div class="ln" style="top:564px">70</div>
<div class="code" style="top:564px;left:319.8px"><span class="k">@enderror</span></div>
<div class="ln" style="top:586px">71</div>
<div class="code" style="top:586px;left:284.7px"><span class="p">&lt;/</span><span class="t">div</span><span class="p">&gt;</span></div>
<div class="ln" style="top:608px">72</div>
<div class="ln" style="top:630px">73</div>
<div class="code" style="top:630px;left:284.7px"><span class="c">{{-- Tombol --}}</span></div>
<div class="ln" style="top:652px">74</div>
<div class="code" style="top:652px;left:284.7px"><span class="p">&lt;</span><span class="t">button</span><span class="x"> </span><span class="a">type</span><span class="e">=</span><span class="s">&quot;submit&quot;</span><span class="x"> </span><span class="a">class</span><span class="e">=</span><span class="s">&quot;btn btn-primary&quot;</span><span class="p">&gt;</span><span class="x">Simpan</span><span class="p">&lt;/</span><span class="t">button</span><span class="p">&gt;</span></div>
<div class="abs" style="left:0;top:22px;width:982px;height:110px;background:#1f1f1f;box-shadow:0 3px 3px -1px #000000">
<div class="ln" style="top:0px">7</div>
<div class="code" style="top:0px;left:109.1px"><span class="p">&lt;</span><span class="t">div</span><span class="x"> </span><span class="a">class</span><span class="e">=</span><span class="s">&quot;card&quot;</span><span class="p">&gt;</span></div>
<div class="ln" style="top:22px">8</div>
<div class="code" style="top:22px;left:144.2px"><span class="p">&lt;</span><span class="t">div</span><span class="x"> </span><span class="a">class</span><span class="e">=</span><span class="s">&quot;card-body&quot;</span><span class="p">&gt;</span></div>
<div class="ln" style="top:44px">10</div>
<div class="code" style="top:44px;left:179.4px"><span class="p">&lt;</span><span class="t">div</span><span class="x"> </span><span class="a">class</span><span class="e">=</span><span class="s">&quot;card&quot;</span><span class="p">&gt;</span></div>
<div class="ln" style="top:66px">11</div>
<div class="code" style="top:66px;left:214.5px"><span class="p">&lt;</span><span class="t">div</span><span class="x"> </span><span class="a">class</span><span class="e">=</span><span class="s">&quot;card-body&quot;</span><span class="p">&gt;</span></div>
<div class="ln" style="top:88px">12</div>
<div class="code" style="top:88px;left:249.6px"><span class="p">&lt;</span><span class="t">form</span><span class="x"> </span><span class="a">action</span><span class="e">=</span><span class="s">&quot;</span><span class="y">{{</span><span class="x"> </span><span class="f">route</span><span class="s">(&#x27;item.update&#x27;, </span><span class="v">$item-&gt;id</span><span class="s">)</span><span class="x"> </span><span class="y">}}</span><span class="s">&quot;</span><span class="x"> </span><span class="a">method</span><span class="e">=</span><span class="s">&quot;POST&quot;</span><span class="x"> </span><span class="a">enctype</span><span class="e">=</span><span class="s">&quot;multipart/form-data&quot;</span><span class="p">&gt;</span></div>
</div>
<div class="abs" style="left:74px;top:663px;width:506px;height:11px;background:rgba(121,121,121,0.4)"></div>
</div>
<div class="abs" style="left:976px;top:22px;width:6px;height:652px;background:linear-gradient(to right, rgba(0,0,0,0), rgba(0,0,0,0.45))"></div>
<svg style="left:990px;top:0px" width="104" height="674" viewBox="0 0 104 674"><path d="M0.00 23.2H8.40M0.00 27.2H8.40M0.00 31.2H11.55M0.00 33.2H8.40M5.25 35.2H8.40M9.45 37.2H12.60M13.65 39.2H15.75M55.65 39.2H57.75M13.65 41.2H16.80M17.85 43.2H21.00M22.05 45.2H26.25M25.20 47.2H30.45M25.20 49.2H32.55M26.25 53.2H29.40M30.45 55.2H35.70M81.90 55.2H87.15M30.45 57.2H35.70M70.35 57.2H76.65M97.65 57.2H104.00M29.40 61.2H35.70M34.65 63.2H39.90M78.75 63.2H84.00M29.40 65.2H38.85M27.30 67.2H30.45M26.25 73.2H29.40M30.45 75.2H35.70M86.10 75.2H91.35M30.45 77.2H36.75M57.75 77.2H64.05M92.40 77.2H101.85M34.65 79.2H40.95M74.55 79.2H80.85M33.60 81.2H42.00M38.85 83.2H45.15M33.60 85.2H45.15M31.50 87.2H37.80M29.40 89.2H35.70M34.65 91.2H39.90M78.75 91.2H84.00M29.40 93.2H38.85M27.30 95.2H30.45M26.25 101.2H29.40M30.45 103.2H35.70M75.60 103.2H80.85M30.45 105.2H35.70M70.35 105.2H76.65M98.70 105.2H104.00M29.40 111.2H35.70M34.65 113.2H39.90M78.75 113.2H84.00M29.40 115.2H38.85M27.30 117.2H30.45M27.30 125.2H30.45M30.45 127.2H35.70M87.15 127.2H92.40M30.45 129.2H35.70M70.35 129.2H76.65M29.40 133.2H35.70M34.65 135.2H39.90M78.75 135.2H84.00M29.40 137.2H38.85M27.30 139.2H30.45M26.25 145.2H29.40M30.45 147.2H35.70M82.95 147.2H88.20M30.45 149.2H36.75M57.75 149.2H64.05M90.30 149.2H99.75M34.65 151.2H40.95M34.65 153.2H40.95M31.50 155.2H37.80M29.40 157.2H35.70M34.65 159.2H39.90M78.75 159.2H84.00M29.40 161.2H38.85M27.30 163.2H30.45M26.25 169.2H32.55M81.90 169.2H88.20M26.25 171.2H27.30M97.65 171.2H98.70M23.10 173.2H27.30M18.90 175.2H22.05M14.70 177.2H17.85M10.50 179.2H13.65M6.30 181.2H9.45M0.00 183.2H11.55M0.00 187.2H8.40M0.00 191.2H11.55" stroke="#406a8c" stroke-width="1.8" stroke-dasharray="0.9 0.15" fill="none"/><path d="M8.40 23.2H9.45M29.40 23.2H30.45M8.40 27.2H9.45M16.80 27.2H17.85M8.40 33.2H9.45M18.90 33.2H19.95M32.55 49.2H33.60M38.85 49.2H39.90M35.70 61.2H36.75M43.05 61.2H44.10M61.95 63.2H63.00M75.60 63.2H76.65M42.00 81.2H43.05M68.25 81.2H69.30M75.60 83.2H77.70M35.70 89.2H36.75M50.40 89.2H51.45M61.95 91.2H63.00M75.60 91.2H76.65M35.70 111.2H36.75M44.10 111.2H45.15M61.95 113.2H63.00M75.60 113.2H76.65M35.70 133.2H36.75M50.40 133.2H51.45M61.95 135.2H63.00M75.60 135.2H76.65M55.65 151.2H56.70M56.70 153.2H57.75M35.70 157.2H36.75M48.30 157.2H49.35M61.95 159.2H63.00M75.60 159.2H76.65M8.40 187.2H9.45M13.65 187.2H14.70" stroke="#a58d0c" stroke-width="1.8" stroke-dasharray="0.9 0.15" fill="none"/><path d="M9.45 23.2H29.40M9.45 27.2H16.80M9.45 33.2H18.90M15.75 35.2H22.05M19.95 37.2H31.50M23.10 39.2H35.70M24.15 41.2H30.45M28.35 43.2H39.90M34.65 45.2H35.70M44.10 45.2H59.85M70.35 45.2H71.40M74.55 45.2H75.60M84.00 45.2H90.30M99.75 45.2H104.00M33.60 49.2H38.85M36.75 53.2H43.05M40.95 55.2H47.25M54.60 55.2H67.20M42.00 57.2H48.30M55.65 57.2H69.30M76.65 57.2H85.05M86.10 57.2H96.60M36.75 59.2H43.05M50.40 59.2H51.45M57.75 59.2H66.15M78.75 59.2H79.80M82.95 59.2H84.00M36.75 61.2H43.05M47.25 63.2H60.90M36.75 73.2H43.05M40.95 75.2H54.60M61.95 75.2H74.55M44.10 77.2H56.70M64.05 77.2H79.80M80.85 77.2H91.35M101.85 77.2H102.90M48.30 79.2H50.40M52.50 83.2H55.65M56.70 83.2H70.35M71.40 83.2H74.55M81.90 83.2H97.65M98.70 83.2H104.00M36.75 89.2H50.40M47.25 91.2H60.90M36.75 101.2H43.05M40.95 103.2H48.30M55.65 103.2H68.25M42.00 105.2H48.30M55.65 105.2H69.30M76.65 105.2H86.10M87.15 105.2H97.65M46.20 107.2H54.60M55.65 107.2H61.95M63.00 107.2H66.15M77.70 107.2H82.95M36.75 109.2H44.10M51.45 109.2H52.50M58.80 109.2H68.25M81.90 109.2H82.95M86.10 109.2H87.15M36.75 111.2H44.10M47.25 113.2H60.90M37.80 125.2H44.10M40.95 127.2H54.60M61.95 127.2H74.55M42.00 129.2H48.30M55.65 129.2H69.30M76.65 129.2H92.40M93.45 129.2H103.95M36.75 131.2H50.40M64.05 131.2H72.45M73.50 131.2H80.85M88.20 131.2H89.25M95.55 131.2H104.00M36.75 133.2H50.40M47.25 135.2H60.90M36.75 145.2H43.05M40.95 147.2H52.50M59.85 147.2H72.45M44.10 149.2H56.70M64.05 149.2H77.70M78.75 149.2H89.25M99.75 149.2H100.80M48.30 151.2H54.60M63.00 151.2H74.55M98.70 151.2H104.00M48.30 153.2H55.65M64.05 153.2H75.60M99.75 153.2H104.00M36.75 157.2H48.30M47.25 159.2H60.90M38.85 169.2H47.25M54.60 169.2H58.80M59.85 169.2H72.45M33.60 171.2H34.65M43.05 171.2H57.75M60.90 171.2H61.95M69.30 171.2H73.50M74.55 171.2H89.25M9.45 187.2H13.65" stroke="#886354" stroke-width="1.8" stroke-dasharray="0.9 0.15" fill="none"/><path d="M4.20 29.2H8.40M9.45 29.2H13.65M14.70 29.2H18.90M19.95 29.2H24.15M25.20 51.2H29.40M30.45 51.2H34.65M35.70 51.2H42.00M43.05 51.2H47.25M25.20 71.2H29.40M30.45 71.2H38.85M39.90 71.2H44.10M25.20 99.2H29.40M30.45 99.2H34.65M35.70 99.2H39.90M26.25 123.2H30.45M31.50 123.2H35.70M36.75 123.2H40.95M42.00 123.2H46.20M25.20 143.2H29.40M30.45 143.2H37.80M38.85 143.2H43.05M25.20 167.2H29.40M30.45 167.2H36.75M37.80 167.2H42.00M4.20 189.2H8.40M9.45 189.2H15.75M16.80 189.2H21.00" stroke="#4c683f" stroke-width="1.8" stroke-dasharray="0.9 0.15" fill="none"/><path d="M4.20 35.2H5.25M22.05 35.2H23.10M8.40 37.2H9.45M31.50 37.2H32.55M12.60 39.2H13.65M35.70 39.2H36.75M53.55 39.2H55.65M57.75 39.2H58.80M12.60 41.2H13.65M30.45 41.2H31.50M16.80 43.2H17.85M39.90 43.2H40.95M21.00 45.2H22.05M25.20 53.2H26.25M43.05 53.2H44.10M29.40 55.2H30.45M67.20 55.2H68.25M79.80 55.2H81.90M87.15 55.2H88.20M29.40 57.2H30.45M93.45 59.2H94.50M33.60 63.2H34.65M60.90 63.2H61.95M76.65 63.2H78.75M84.00 63.2H85.05M25.20 67.2H27.30M30.45 67.2H31.50M25.20 73.2H26.25M43.05 73.2H44.10M29.40 75.2H30.45M74.55 75.2H75.60M84.00 75.2H86.10M91.35 75.2H92.40M29.40 77.2H30.45M33.60 79.2H34.65M50.40 79.2H51.45M72.45 79.2H74.55M80.85 79.2H81.90M37.80 83.2H38.85M29.40 87.2H31.50M37.80 87.2H38.85M33.60 91.2H34.65M60.90 91.2H61.95M76.65 91.2H78.75M84.00 91.2H85.05M25.20 95.2H27.30M30.45 95.2H31.50M25.20 101.2H26.25M43.05 101.2H44.10M29.40 103.2H30.45M68.25 103.2H69.30M73.50 103.2H75.60M80.85 103.2H81.90M29.40 105.2H30.45M96.60 109.2H97.65M33.60 113.2H34.65M60.90 113.2H61.95M76.65 113.2H78.75M84.00 113.2H85.05M25.20 117.2H27.30M30.45 117.2H31.50M26.25 125.2H27.30M44.10 125.2H45.15M29.40 127.2H30.45M74.55 127.2H75.60M85.05 127.2H87.15M92.40 127.2H93.45M29.40 129.2H30.45M33.60 135.2H34.65M60.90 135.2H61.95M76.65 135.2H78.75M84.00 135.2H85.05M25.20 139.2H27.30M30.45 139.2H31.50M25.20 145.2H26.25M43.05 145.2H44.10M29.40 147.2H30.45M72.45 147.2H73.50M80.85 147.2H82.95M88.20 147.2H89.25M29.40 149.2H30.45M33.60 151.2H34.65M33.60 153.2H34.65M29.40 155.2H31.50M37.80 155.2H38.85M33.60 159.2H34.65M60.90 159.2H61.95M76.65 159.2H78.75M84.00 159.2H85.05M25.20 163.2H27.30M30.45 163.2H31.50M25.20 169.2H26.25M72.45 169.2H73.50M79.80 169.2H81.90M88.20 169.2H89.25M25.20 171.2H26.25M89.25 171.2H90.30M95.55 171.2H97.65M98.70 171.2H99.75M21.00 173.2H23.10M27.30 173.2H28.35M16.80 175.2H18.90M22.05 175.2H23.10M12.60 177.2H14.70M17.85 177.2H18.90M8.40 179.2H10.50M13.65 179.2H14.70M4.20 181.2H6.30M9.45 181.2H10.50" stroke="#595959" stroke-width="1.8" stroke-dasharray="0.9 0.15" fill="none"/><path d="M9.45 35.2H14.70M13.65 37.2H18.90M16.80 39.2H22.05M17.85 41.2H23.10M22.05 43.2H27.30M27.30 45.2H33.60M60.90 45.2H70.35M76.65 45.2H82.95M91.35 45.2H98.70M30.45 53.2H35.70M36.75 55.2H39.90M48.30 55.2H53.55M36.75 57.2H40.95M49.35 57.2H54.60M33.60 59.2H35.70M44.10 59.2H49.35M67.20 59.2H78.75M40.95 63.2H46.20M65.10 63.2H73.50M30.45 73.2H35.70M36.75 75.2H39.90M55.65 75.2H60.90M37.80 77.2H43.05M103.95 77.2H104.00M42.00 79.2H47.25M43.05 81.2H54.60M58.80 81.2H68.25M46.20 83.2H51.45M40.95 91.2H46.20M65.10 91.2H73.50M30.45 101.2H35.70M36.75 103.2H39.90M49.35 103.2H54.60M36.75 105.2H40.95M49.35 105.2H54.60M33.60 107.2H45.15M67.20 107.2H76.65M33.60 109.2H35.70M45.15 109.2H50.40M69.30 109.2H81.90M40.95 113.2H46.20M65.10 113.2H73.50M31.50 125.2H36.75M36.75 127.2H39.90M55.65 127.2H60.90M36.75 129.2H40.95M49.35 129.2H54.60M33.60 131.2H35.70M51.45 131.2H63.00M81.90 131.2H87.15M40.95 135.2H46.20M65.10 135.2H73.50M30.45 145.2H35.70M36.75 147.2H39.90M53.55 147.2H58.80M37.80 149.2H43.05M101.85 149.2H104.00M42.00 151.2H47.25M76.65 151.2H81.90M84.00 151.2H93.45M42.00 153.2H47.25M77.70 153.2H82.95M85.05 153.2H94.50M40.95 159.2H46.20M65.10 159.2H73.50M33.60 169.2H37.80M48.30 169.2H53.55M28.35 171.2H32.55M63.00 171.2H68.25" stroke="#6a90a4" stroke-width="1.8" stroke-dasharray="0.9 0.15" fill="none"/><path d="M14.70 35.2H15.75M18.90 37.2H19.95M22.05 39.2H23.10M36.75 39.2H40.95M42.00 39.2H46.20M47.25 39.2H53.55M23.10 41.2H24.15M27.30 43.2H28.35M33.60 45.2H34.65M82.95 45.2H84.00M98.70 45.2H99.75M35.70 53.2H36.75M39.90 55.2H40.95M53.55 55.2H54.60M68.25 55.2H72.45M73.50 55.2H79.80M40.95 57.2H42.00M54.60 57.2H55.65M35.70 59.2H36.75M49.35 59.2H50.40M85.05 59.2H93.45M46.20 63.2H47.25M35.70 73.2H36.75M39.90 75.2H40.95M60.90 75.2H61.95M75.60 75.2H84.00M43.05 77.2H44.10M47.25 79.2H48.30M51.45 79.2H53.55M54.60 79.2H59.85M60.90 79.2H69.30M70.35 79.2H72.45M55.65 81.2H57.75M51.45 83.2H52.50M46.20 91.2H47.25M35.70 101.2H36.75M39.90 103.2H40.95M54.60 103.2H55.65M69.30 103.2H73.50M40.95 105.2H42.00M54.60 105.2H55.65M45.15 107.2H46.20M76.65 107.2H77.70M35.70 109.2H36.75M50.40 109.2H51.45M88.20 109.2H96.60M46.20 113.2H47.25M36.75 125.2H37.80M39.90 127.2H40.95M60.90 127.2H61.95M75.60 127.2H79.80M80.85 127.2H85.05M40.95 129.2H42.00M54.60 129.2H55.65M35.70 131.2H36.75M63.00 131.2H64.05M87.15 131.2H88.20M46.20 135.2H47.25M35.70 145.2H36.75M39.90 147.2H40.95M58.80 147.2H59.85M73.50 147.2H80.85M43.05 149.2H44.10M47.25 151.2H48.30M74.55 151.2H75.60M81.90 151.2H84.00M95.55 151.2H97.65M47.25 153.2H48.30M75.60 153.2H76.65M82.95 153.2H85.05M96.60 153.2H98.70M46.20 159.2H47.25M37.80 169.2H38.85M53.55 169.2H54.60M73.50 169.2H79.80M32.55 171.2H33.60M68.25 171.2H69.30M90.30 171.2H95.55" stroke="#8b8b8b" stroke-width="1.8" stroke-dasharray="0.9 0.15" fill="none"/><path d="M35.70 45.2H37.80M72.45 45.2H74.55M51.45 59.2H53.55M80.85 59.2H82.95M52.50 109.2H54.60M84.00 109.2H86.10M89.25 131.2H91.35M34.65 171.2H36.75M58.80 171.2H60.90" stroke="#8d7c57" stroke-width="1.8" stroke-dasharray="0.9 0.15" fill="none"/><path d="M38.85 45.2H44.10M54.60 59.2H57.75M78.75 83.2H81.90M55.65 109.2H58.80M92.40 131.2H95.55M58.80 151.2H61.95M59.85 153.2H63.00M37.80 171.2H43.05" stroke="#909072" stroke-width="1.8" stroke-dasharray="0.9 0.15" fill="none"/><path d="M63.00 63.2H64.05M74.55 63.2H75.60M63.00 91.2H64.05M74.55 91.2H75.60M63.00 113.2H64.05M74.55 113.2H75.60M63.00 135.2H64.05M74.55 135.2H75.60M56.70 151.2H57.75M57.75 153.2H58.80M63.00 159.2H64.05M74.55 159.2H75.60" stroke="#8f4f8c" stroke-width="1.8" stroke-dasharray="0.9 0.15" fill="none"/><path d="M61.95 151.2H63.00M93.45 151.2H94.50M63.00 153.2H64.05M94.50 153.2H95.55" stroke="#1a6ba5" stroke-width="1.8" stroke-dasharray="0.9 0.15" fill="none"/></svg>
<div class="abs" style="left:1094px;top:22px;width:1px;height:652px;background:#141414"></div>
<div class="abs" style="left:1094px;top:275px;width:14px;height:168px;background:rgba(121,121,121,0.4)"></div>
<div class="abs" style="left:1095px;top:22px;width:13px;height:2px;background:#9a9a9a"></div>
</div>
<div id="status" class="abs">
<div class="abs" style="left:0;top:0;width:34px;height:21px;background:#0078d4"></div>
<svg style="left:10px;top:4px" width="14" height="14" viewBox="10 749 14 14"><path d="M12.3 751.8 L16.3 755.6 L12.3 759.6 M21.7 749.4 L17.8 752.7 L21.7 756" fill="none" stroke="#ffffff" stroke-width="1.3"/></svg>
<svg style="left:42.5px;top:3.8px" width="13" height="13" viewBox="0 0 13 13"><circle cx="6.5" cy="6.5" r="5.8" fill="none" stroke="#cccccc" stroke-width="1.1"/><path d="M4 4 L9 9 M9 4 L4 9" stroke="#cccccc" stroke-width="1.1"/></svg>
<div class="st" style="left:58.3px;font-size:13px;top:2.8px">0</div>
<svg style="left:70px;top:4.0px" width="13" height="12" viewBox="0 0 13 12"><path d="M6.5 0.8 L12.3 11.3 H0.7 Z M6.5 4 V8 M6.5 9.2 V10.4" fill="none" stroke="#cccccc" stroke-width="1.1" stroke-linejoin="round"/></svg>
<div class="st" style="left:85.8px;font-size:13px;top:2.8px">0</div>
<svg style="left:112px;top:3.8px" width="9" height="12" viewBox="0 0 9 12"><path d="M5.5 0.6 L1 6.5 H4.5 L3 11.4 L8 5 H4.5 L6.5 0.6 Z" fill="none" stroke="#cccccc" stroke-width="1"/></svg>
<div class="st" style="left:871.1px">Ln 1, Col 1</div>
<div class="st" style="left:942.5px">Spaces: 4</div>
<div class="st" style="left:1007.1px">UTF-8</div>
<div class="st" style="left:1054.7px">CRLF</div>
<div class="st" style="left:1117.1px">Blade</div>
<div class="st" style="left:1209.4px">Go Live</div>
<div class="st" style="left:1282.2px">Prettier</div>
<svg style="left:1096px;top:3px" width="16" height="15" viewBox="1096 748 16 15"><path d="M1102.2 750.2 Q1100.6 750.2 1100.6 751.6 V754.2 Q1100.6 755.1 1099.4 755.1 Q1100.6 755.1 1100.6 756 V758.6 Q1100.6 760 1102.2 760 M1106.2 750.2 Q1107.8 750.2 1107.8 751.6 V754.2 Q1107.8 755.1 1109.4 755.1 Q1107.8 755.1 1107.8 756 V758.6 Q1107.8 760 1106.2 760" fill="none" stroke="#cccccc" stroke-width="1.1"/></svg>
<svg style="left:1160px;top:2px" width="20" height="18" viewBox="1160 747 20 18"><circle cx="1167.6" cy="751.8" r="3.1" fill="#d0d0d0"/><circle cx="1172.6" cy="751.8" r="3.1" fill="#d0d0d0"/><rect x="1162.6" y="753.8" width="14.6" height="7" rx="3.2" fill="#d0d0d0"/><circle cx="1167.6" cy="751.6" r="1.5" fill="#181818"/><circle cx="1172.6" cy="751.6" r="1.5" fill="#181818"/><rect x="1165.8" y="755.4" width="8.6" height="3.4" fill="#181818"/><rect x="1167.9" y="755.9" width="1.1" height="2.6" fill="#d0d0d0"/><rect x="1171" y="755.9" width="1.1" height="2.6" fill="#d0d0d0"/></svg>
<svg style="left:1194px;top:3.8px" width="12" height="13" viewBox="0 0 12 13"><path d="M2.2 9.5 Q0.6 8 0.6 5.8 Q0.6 0.6 6 0.6 Q11.4 0.6 11.4 5.8 Q11.4 8 9.8 9.5 M3.8 7.8 Q3 7 3 5.8 Q3 3 6 3 Q9 3 9 5.8 Q9 7 8.2 7.8" fill="none" stroke="#cccccc" stroke-width="1.1"/><circle cx="6" cy="5.8" r="1.2" fill="#cccccc"/><path d="M6 7 V12.6" stroke="#cccccc" stroke-width="1.4"/></svg>
<svg style="left:1265.8px;top:3.8px" width="13" height="13" viewBox="0 0 13 13"><circle cx="6.5" cy="6.5" r="5.8" fill="none" stroke="#cccccc" stroke-width="1.1"/><path d="M2.4 10.6 L10.6 2.4" stroke="#cccccc" stroke-width="1.1"/></svg>
<svg style="left:1338px;top:3.5px" width="13" height="13" viewBox="0 0 13 13"><path d="M6.5 0.8 Q10.5 0.8 10.5 5 V8.5 L12 10.5 H1 L2.5 8.5 V5 Q2.5 0.8 6.5 0.8 Z M5 11.5 Q6.5 13 8 11.5" fill="none" stroke="#cccccc" stroke-width="1.1" stroke-linejoin="round"/></svg>
</div>
<div id="bottomedge" class="abs"></div>
</body></html>
